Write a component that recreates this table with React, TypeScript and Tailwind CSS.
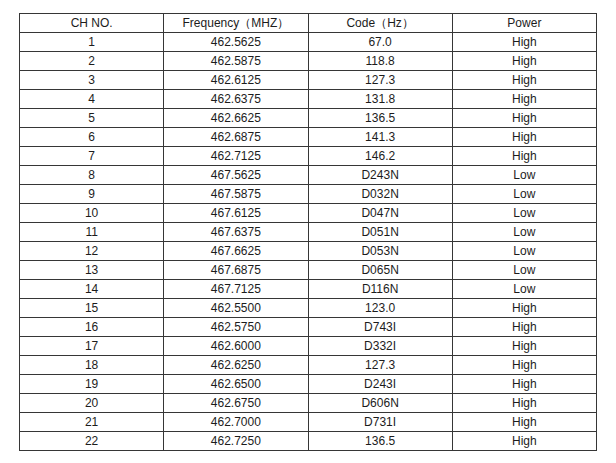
import React from 'react'

const rows: [number, string, string, string][] = [
    [1, '462.5625', '67.0', 'High'],
    [2, '462.5875', '118.8', 'High'],
    [3, '462.6125', '127.3', 'High'],
    [4, '462.6375', '131.8', 'High'],
    [5, '462.6625', '136.5', 'High'],
    [6, '462.6875', '141.3', 'High'],
    [7, '462.7125', '146.2', 'High'],
    [8, '467.5625', 'D243N', 'Low'],
    [9, '467.5875', 'D032N', 'Low'],
    [10, '467.6125', 'D047N', 'Low'],
    [11, '467.6375', 'D051N', 'Low'],
    [12, '467.6625', 'D053N', 'Low'],
    [13, '467.6875', 'D065N', 'Low'],
    [14, '467.7125', 'D116N', 'Low'],
    [15, '462.5500', '123.0', 'High'],
    [16, '462.5750', 'D743I', 'High'],
    [17, '462.6000', 'D332I', 'High'],
    [18, '462.6250', '127.3', 'High'],
    [19, '462.6500', 'D243I', 'High'],
    [20, '462.6750', 'D606N', 'High'],
    [21, '462.7000', 'D731I', 'High'],
    [22, '462.7250', '136.5', 'High'],
]

const cell = 'border border-[#363636] h-[19px] p-0 text-center align-middle leading-[18px]'

const App = () => {
    return (
        <div className="w-[616px] h-[463px] bg-white overflow-hidden font-['Liberation_Sans',Arial,sans-serif] text-[12px] text-[#1c1c1c]">
            {/* caption of the page above, mostly scrolled out of view */}
            <div className="h-[3px] overflow-hidden pl-[24px]">
                <p className="-mt-[12px] text-[13px] leading-[15px] text-[#e2e2e2]">Channel and Code Table</p>
            </div>

            <div className="pl-[19px] pt-[10px]">
                <table className="w-[578px] table-fixed border-collapse">
                    <thead>
                        <tr>
                            <th className={`${cell} font-normal`}>CH NO.</th>
                            <th className={`${cell} font-normal`}>Frequency（MHZ）</th>
                            <th className={`${cell} font-normal`}>Code（Hz）</th>
                            <th className={`${cell} font-normal`}>Power</th>
                        </tr>
                    </thead>
                    <tbody>
                        {rows.map(([ch, freq, code, power]) => (
                            <tr key={ch}>
                                <td className={cell}>{ch}</td>
                                <td className={cell}>{freq}</td>
                                <td className={cell}>{code}</td>
                                <td className={cell}>{power}</td>
                            </tr>
                        ))}
                    </tbody>
                </table>
            </div>
        </div>
    )
}

export default App
